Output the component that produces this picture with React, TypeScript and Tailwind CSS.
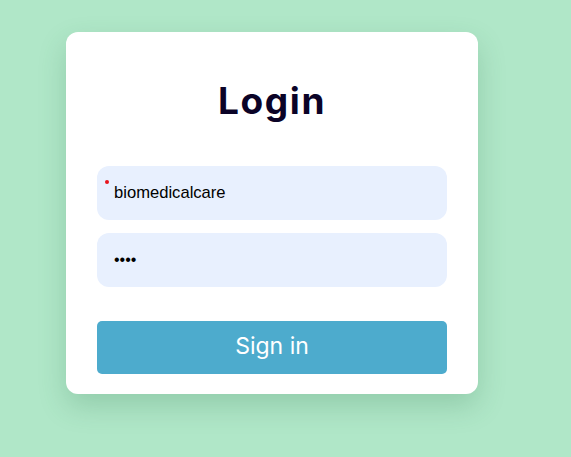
import React from "react";

export default function App() {
  return (
    <div className="min-h-[457px] w-[571px] bg-[#b0e7c8] pt-[32px] pl-[66px]">
      <div className="w-[412px] rounded-[12px] bg-white px-[31px] pt-[41px] pb-[20px] shadow-[0_12px_28px_rgba(40,110,70,0.22)]">
        <h1 className="h-[54px] text-center text-[37px] leading-[56px] font-bold text-[#0b0327] [font-family:Inter,'Noto_Sans',sans-serif] tracking-[1.6px]">
          Login
        </h1>
        <div className="mt-[39px] flex flex-col gap-[13px]">
          <div className="relative">
            <input
              readOnly
              value="biomedicalcare"
              className="h-[54px] w-full rounded-[12px] bg-[#e8f0fe] pl-[17px] text-[16.6px] text-black outline-none [font-family:'Liberation_Sans',Arial,sans-serif]"
            />
            <span className="absolute left-[8px] top-[14px] h-[4px] w-[4px] rounded-full bg-[#e8141c]" />
          </div>
          <input
            readOnly
            type="password"
            value="1234"
            className="h-[54px] w-full rounded-[12px] bg-[#e8f0fe] pl-[17px] text-[16px] text-black outline-none [font-family:'Liberation_Sans',Arial,sans-serif]"
          />
        </div>
        <button className="mt-[34px] flex h-[53px] w-full items-center justify-center rounded-[5px] bg-[#4dabcd] pb-[2px] text-[23px] font-normal text-white [font-family:Inter,'Noto_Sans',sans-serif]">
          Sign in
        </button>
      </div>
    </div>
  );
}
